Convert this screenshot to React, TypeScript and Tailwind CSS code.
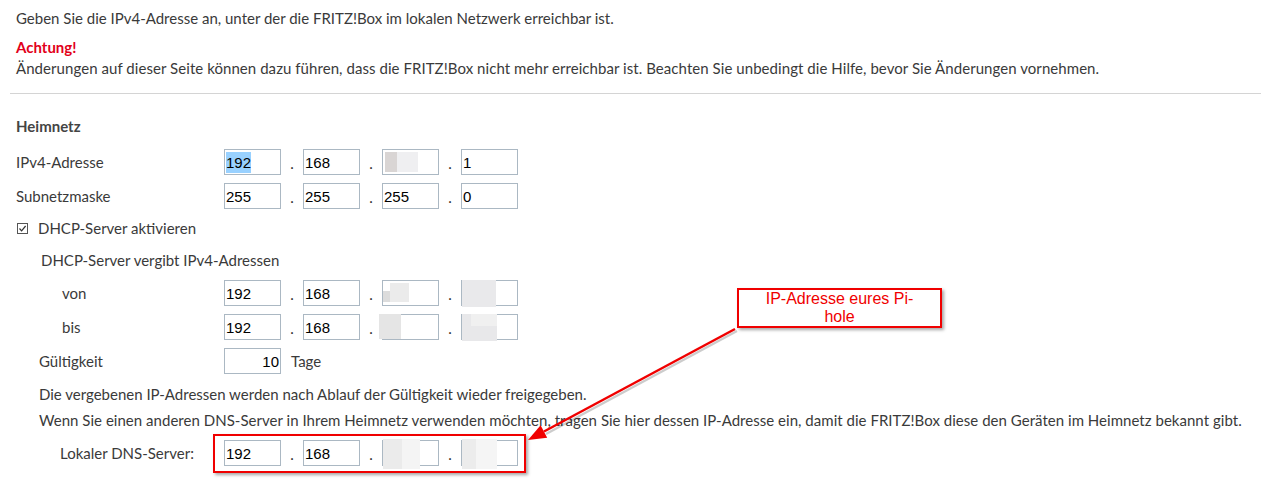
const inputBox = "relative w-[57px] h-[26px] border border-[#abb8c3] bg-white overflow-visible";

type Patch = string;

function Field({ value, selected, patches = [], right }: { value?: string; selected?: boolean; patches?: Patch[]; right?: boolean }) {
  return (
    <div className={inputBox}>
      {patches.map((p, i) => (
        <div key={i} className={`absolute ${p}`} />
      ))}
      {value && (
        <div
          className={`absolute inset-0 flex items-center font-['Liberation_Sans',Arial,sans-serif] text-[15px] text-black ${
            right ? "justify-end pr-[1px]" : "pl-[1px]"
          }`}
        >
          <span className={selected ? "bg-[#99d1ff] leading-[21px]" : "leading-[21px]"}>{value}</span>
        </div>
      )}
    </div>
  );
}

function Dot() {
  return <span className="w-[22px] h-[26px] text-center leading-[28px] text-[#333]">.</span>;
}

function IpGroup({ parts }: { parts: { value?: string; selected?: boolean; patches?: Patch[] }[] }) {
  return (
    <div className="flex items-center h-[26px]">
      {parts.map((p, i) => (
        <div key={i} className="flex items-center h-[26px]">
          {i > 0 && <Dot />}
          <Field {...p} />
        </div>
      ))}
    </div>
  );
}

function Row({ label, indent = "", className = "", children }: { label: string; indent?: string; className?: string; children: React.ReactNode }) {
  return (
    <div className={`grid grid-cols-[208px_auto] items-center h-[26px] ${className}`}>
      <span className={indent}>{label}</span>
      {children}
    </div>
  );
}

export default function App() {
  return (
    <div className="relative w-[1261px] h-[487px] overflow-hidden bg-white font-['Lato',sans-serif] text-[15px] leading-[21px] text-[#3a3a3a]">
      <div className="pl-4 pt-2">
        <p>Geben Sie die IPv4-Adresse an, unter der die FRITZ!Box im lokalen Netzwerk erreichbar ist.</p>
        <p className="mt-2 font-bold text-[#e2001a]">Achtung!</p>
        <p className="tracking-[0.06px]">
          Änderungen auf dieser Seite können dazu führen, dass die FRITZ!Box nicht mehr erreichbar ist. Beachten Sie unbedingt die Hilfe, bevor Sie Änderungen vornehmen.
        </p>
      </div>
      <div className="ml-[10px] mt-[14px] h-px bg-[#d4d4d4]" />

      <div className="pl-4">
        <h2 className="mt-[22px] font-bold text-[#444]">Heimnetz</h2>

        <Row label="IPv4-Adresse" className="mt-3">
          <IpGroup
            parts={[
              { value: "192", selected: true },
              { value: "168" },
              { patches: ["left-[2px] top-[2px] w-[12px] h-[20px] bg-[#d9d5d4]", "left-[14px] top-[2px] w-[21px] h-[20px] bg-[#efeff1]"] },
              { value: "1" },
            ]}
          />
        </Row>
        <Row label="Subnetzmaske" className="mt-2">
          <IpGroup parts={[{ value: "255" }, { value: "255" }, { value: "255" }, { value: "0" }]} />
        </Row>

        <label className="mt-[9px] flex items-center h-[21px]">
          <svg width="11" height="11" viewBox="0 0 11 11" className="ml-px">
            <rect x="0.5" y="0.5" width="10" height="10" fill="white" stroke="#555" />
            <path d="M2.5 5.5 L4.6 7.8 L8.6 3" fill="none" stroke="#333" strokeWidth="1.2" />
          </svg>
          <span className="ml-[10px]">DHCP-Server aktivieren</span>
        </label>

        <p className="mt-[11px] pl-[25px]">DHCP-Server vergibt IPv4-Adressen</p>

        <Row label="von" indent="pl-[46px]" className="mt-[9px]">
          <IpGroup
            parts={[
              { value: "192" },
              { value: "168" },
              { patches: ["left-0 top-[10px] w-[7px] h-[11px] bg-[#dcdcdc]", "left-[7px] top-[2px] w-[19px] h-[19px] bg-[#ebebeb]"] },
              { patches: ["left-0 top-[-1px] w-[34px] h-[27px] bg-[#e9e9eb]"] },
            ]}
          />
        </Row>
        <Row label="bis" indent="pl-[46px]" className="mt-2">
          <IpGroup
            parts={[
              { value: "192" },
              { value: "168" },
              { patches: ["left-[-4px] top-[-1px] w-[22px] h-[25px] bg-[#e5e5e5]"] },
              { patches: ["left-0 top-[-1px] w-[35px] h-[27px] bg-[#e8e8ea]", "left-[9px] top-[-1px] w-[26px] h-[12px] bg-[#f0f0f0]"] },
            ]}
          />
        </Row>

        <Row label="Gültigkeit" indent="pl-[23px]" className="mt-2">
          <div className="flex items-center">
            <Field value="10" right />
            <span className="ml-[10px]">Tage</span>
          </div>
        </Row>

        <p className="mt-[10px] pl-[23px]">Die vergebenen IP-Adressen werden nach Ablauf der Gültigkeit wieder freigegeben.</p>
        <p className="mt-[5px] pl-[23px] tracking-[0.03px]">
          Wenn Sie einen anderen DNS-Server in Ihrem Heimnetz verwenden möchten, tragen Sie hier dessen IP-Adresse ein, damit die FRITZ!Box diese den Geräten im Heimnetz bekannt gibt.
        </p>

        <Row label="Lokaler DNS-Server:" indent="pl-[44px]" className="mt-[9px]">
          <div className="relative w-fit">
            <IpGroup
              parts={[
                { value: "192" },
                { value: "168" },
                { patches: ["left-0 top-[-2px] w-[19px] h-[30px] bg-[#ebebeb]", "left-[19px] top-[-2px] w-[18px] h-[30px] bg-[#f4f4f4]"] },
                { patches: ["left-0 top-[-2px] w-[14px] h-[30px] bg-[#ececec]", "left-[14px] top-[-2px] w-[21px] h-[30px] bg-[#f5f5f5]"] },
              ]}
            />
            <div className="absolute left-[-11px] top-[-6px] right-[-8px] bottom-[-7px] border-2 border-[#f00000] shadow-[2px_2px_3px_rgba(0,0,0,0.35)]" />
          </div>
        </Row>
      </div>

      {/* Callout */}
      <div className="absolute left-[737px] top-[288px] w-[205px] h-[40px] border-2 border-[#f00000] bg-white shadow-[2px_2px_3px_rgba(0,0,0,0.35)] text-center font-['Liberation_Sans',Arial,sans-serif] text-[16px] leading-[18px] text-[#f00000]">
        IP-Adresse eures Pi-
        <br />
        hole
      </div>

      <svg className="absolute left-0 top-0 pointer-events-none" width="1261" height="487">
        <line x1="737" y1="331" x2="546" y2="434" stroke="rgba(0,0,0,0.2)" strokeWidth="2.5" />
        <line x1="735" y1="329" x2="544" y2="431.5" stroke="#f00000" strokeWidth="2.5" />
        <polygon points="528,440 547.2,437.7 540.6,425.3" fill="#f00000" />
      </svg>
    </div>
  );
}
